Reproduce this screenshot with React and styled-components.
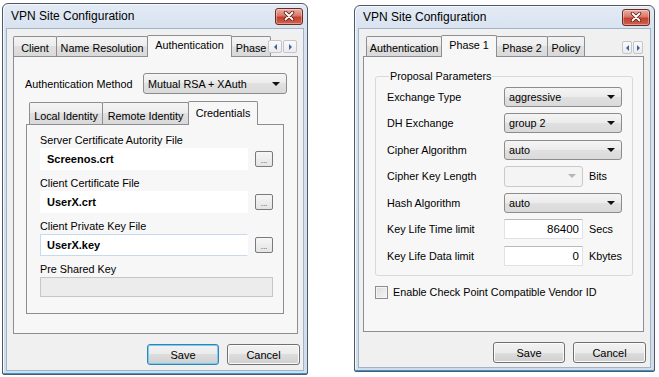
import React from "react";
import styled, { createGlobalStyle } from "styled-components";

const GlobalStyle = createGlobalStyle`
  * { box-sizing: border-box; }
  html, body { margin: 0; padding: 0; background: #ffffff; }
  body {
    font-family: "Liberation Sans", Arial, sans-serif;
    font-size: 10.8px;
    color: #000;
  }
`;

const Stage = styled.div`
  width: 659px;
  height: 377px;
  display: flex;
  align-items: flex-start;
  padding-left: 2px;
  gap: 46px;
`;

const Window = styled.div`
  width: ${({ w }) => w}px;
  height: ${({ h }) => h}px;
  margin-top: ${({ top }) => top}px;
  display: flex;
  flex-direction: column;
  border: 1px solid #4e5866;
  border-radius: 6px 6px 2px 2px;
  background: linear-gradient(#e2eaf5, #d8e3f0 24px, #d0ddec);
  padding: 0 3px 3px;
  box-shadow: inset 0 -1px 0 #3b95c9, inset 1px 1px 0 #f6f9fc;
`;

const TitleBar = styled.div`
  height: ${({ h }) => h}px;
  display: flex;
  align-items: center;
  justify-content: space-between;
  padding: 0 1px 0 5px;
`;

const Title = styled.span`
  font-size: 12px;
`;

const CloseButton = styled.div`
  width: 28px;
  height: 17px;
  border: 1px solid #6b2a24;
  border-radius: 3px;
  background: linear-gradient(#eab0a2, #d8776a 45%, #c3412f 55%, #d0604f);
  box-shadow: inset 0 0 0 1px rgba(255, 255, 255, 0.35);
  display: flex;
  align-items: center;
  justify-content: center;
`;

const Client = styled.div`
  flex: 1;
  display: flex;
  flex-direction: column;
  background: #f0f0f0;
  border: 1px solid #a2b3c7;
  padding: 7px 0 ${({ pb }) => pb}px;
`;

const TabArea = styled.div`
  flex: 1;
  display: flex;
  flex-direction: column;
  margin: ${({ m }) => m};
`;

const TabStrip = styled.div`
  position: relative;
  height: ${({ h }) => h}px;
  display: flex;
  align-items: flex-end;
  padding-left: ${({ lead }) => lead || 0}px;
`;

const Tab = styled.div`
  position: relative;
  z-index: ${({ active }) => (active ? 2 : 1)};
  width: ${({ w }) => w}px;
  height: ${({ active, h }) => (active ? h + 2 : h)}px;
  margin-bottom: ${({ active }) => (active ? -1 : 0)}px;
  margin-left: -1px;
  &:first-child {
    margin-left: 0;
  }
  border: 1px solid #8c8e94;
  border-bottom: none;
  border-radius: 2px 2px 0 0;
  background: ${({ active }) =>
    active
      ? "#f7f7f7"
      : "linear-gradient(#f4f4f4, #ececec 50%, #e0e0e0 50%, #d9d9d9)"};
  display: flex;
  justify-content: center;
  align-items: flex-start;
  padding-top: ${({ active, h }) => (active ? h - 17 : h - 15)}px;
  line-height: 13px;
  white-space: nowrap;
  overflow: hidden;
`;

const ArrowPair = styled.div`
  position: absolute;
  right: 1px;
  top: ${({ top }) => top}px;
  display: flex;
  gap: 1px;
  z-index: 3;
`;

const ArrowButton = styled.div`
  width: ${({ w }) => w}px;
  height: 13px;
  border: 1px solid #c4c6ca;
  border-radius: 2px;
  background: linear-gradient(#fafafa, #ececec);
  display: flex;
  align-items: center;
  justify-content: center;
  &::after {
    content: "";
    border-top: 3px solid transparent;
    border-bottom: 3px solid transparent;
    ${({ dir }) =>
      dir === "left"
        ? "border-right: 3px solid #3a64a8;"
        : "border-left: 3px solid #3a64a8;"}
  }
`;

const Panel = styled.div`
  flex: 1;
  display: flex;
  flex-direction: column;
  border: 1px solid #8c8e94;
  background: #f7f7f7;
  padding: ${({ p }) => p};
`;

const MethodRow = styled.div`
  display: flex;
  align-items: center;
  height: 21px;
`;

const MethodLabel = styled.span`
  width: 118px;
`;

const Combo = styled.div`
  width: ${({ w }) => w}px;
  height: ${({ h }) => h || 20}px;
  display: flex;
  align-items: center;
  padding: 0 6px 0 4px;
  border: 1px solid ${({ disabled }) => (disabled ? "#c9c9c9" : "#8b8b8b")};
  border-radius: 3px;
  background: ${({ disabled }) =>
    disabled ? "#f4f4f4" : "linear-gradient(#f5f5f5, #ebebeb 50%, #e0e0e0 50%, #dadada)"};
`;

const ComboText = styled.span`
  flex: 1;
`;

const Caret = styled.span`
  width: 0;
  height: 0;
  border-left: 4px solid transparent;
  border-right: 4px solid transparent;
  border-top: 4px solid ${({ disabled }) => (disabled ? "#b5b5b5" : "#111")};
`;

const InnerBox = styled.div`
  flex: 1;
  display: flex;
  flex-direction: column;
  margin: 8px 3px 19px 1px;
`;

const FieldList = styled.div`
  display: flex;
  flex-direction: column;
  gap: 7px;
`;

const Field = styled.div`
  display: flex;
  flex-direction: column;
  gap: 1px;
`;

const FieldLabel = styled.span`
  line-height: 13px;
`;

const FileRow = styled.div`
  display: flex;
  align-items: center;
  gap: 7px;
`;

const FileInput = styled.div`
  width: 208px;
  height: 22px;
  display: flex;
  align-items: center;
  padding-left: 6px;
  background: #ffffff;
  border: 1px solid ${({ focused }) => (focused ? "#c6daee" : "#ffffff")};
  border-right-color: #ffffff;
  font-weight: bold;
  font-size: 11px;
`;

const BrowseButton = styled.div`
  width: 18px;
  height: 16px;
  border: 1px solid #7a7a7a;
  border-radius: 2px;
  background: linear-gradient(#f6f6f6, #e4e4e4);
  display: flex;
  align-items: flex-end;
  justify-content: center;
  font-size: 8px;
  line-height: 11px;
  color: #333;
`;

const DisabledInput = styled.div`
  width: 233px;
  height: 20px;
  background: #ececec;
  border: 1px solid #c6c6c6;
`;

const Group = styled.fieldset`
  margin: 13px 0 0;
  padding: 4px 0 9px 11px;
  border: 1px solid #d3dbe0;
  border-radius: 3px;
`;

const Legend = styled.legend`
  margin-left: 2px;
  padding: 0 1px;
  line-height: 13px;
`;

const ParamGrid = styled.div`
  display: grid;
  grid-template-columns: 117px auto;
  row-gap: 6.3px;
  align-items: center;
`;

const Control = styled.div`
  display: flex;
  align-items: center;
  gap: 6px;
`;

const NumberInput = styled.div`
  width: 79px;
  height: 20px;
  display: flex;
  align-items: center;
  justify-content: flex-end;
  padding-right: 3px;
  background: #ffffff;
  border: 1px solid #dfe3e8;
  border-top-color: #b5b9c0;
  font-size: 11.5px;
`;

const CheckRow = styled.div`
  display: flex;
  align-items: center;
  gap: 5px;
  margin-top: 10px;
`;

const CheckBox = styled.div`
  width: 13px;
  height: 13px;
  border: 1px solid #8f8f8f;
  background: linear-gradient(135deg, #dcdcdc, #f6f6f6);
  box-shadow: inset 0 0 0 1px #f4f4f4;
`;

const ButtonRow = styled.div`
  display: flex;
  justify-content: flex-end;
  gap: 8px;
  margin-top: 10px;
  padding-right: ${({ pr }) => pr}px;
`;

const Button = styled.div`
  width: ${({ w }) => w}px;
  height: 21px;
  display: flex;
  align-items: center;
  justify-content: center;
  border: 1px solid ${({ primary }) => (primary ? "#3c7fb1" : "#707070")};
  border-radius: 3px;
  background: linear-gradient(#f2f2f2, #ebebeb 50%, #dddddd 50%, #cfcfcf);
  box-shadow: inset 0 0 0 1px ${({ primary }) => (primary ? "#6ed0f4" : "#fbfbfb")};
  font-size: 11px;
`;

const CloseIcon = () => (
  <svg width="12" height="10" viewBox="0 0 12 10">
    <path d="M2.5 1.5 L9.5 8.5 M9.5 1.5 L2.5 8.5" stroke="#5a1a14" strokeWidth="3.4" strokeLinecap="round" />
    <path d="M2.5 1.5 L9.5 8.5 M9.5 1.5 L2.5 8.5" stroke="#ffffff" strokeWidth="1.8" strokeLinecap="round" />
  </svg>
);

const WindowFrame = ({ w, h, top, tb, children }) => (
  <Window w={w} h={h} top={top}>
    <TitleBar h={tb}>
      <Title>VPN Site Configuration</Title>
      <CloseButton>
        <CloseIcon />
      </CloseButton>
    </TitleBar>
    {children}
  </Window>
);

const Arrows = ({ top, w }) => (
  <ArrowPair top={top}>
    <ArrowButton w={w} dir="left" />
    <ArrowButton w={w} dir="right" />
  </ArrowPair>
);

const files = [
  { label: "Server Certificate Autority File", value: "Screenos.crt" },
  { label: "Client Certificate File", value: "UserX.crt" },
  { label: "Client Private Key File", value: "UserX.key", focused: true },
];

const params = [
  { label: "Exchange Type", combo: "aggressive" },
  { label: "DH Exchange", combo: "group 2" },
  { label: "Cipher Algorithm", combo: "auto" },
  { label: "Cipher Key Length", combo: "", disabled: true, unit: "Bits" },
  { label: "Hash Algorithm", combo: "auto" },
  { label: "Key Life Time limit", value: "86400", unit: "Secs" },
  { label: "Key Life Data limit", value: "0", unit: "Kbytes" },
];

const AuthenticationWindow = () => (
  <WindowFrame w={306} h={372} top={3} tb={24}>
    <Client pb={5}>
      <TabArea m="0 5px 0 6px">
        <TabStrip h={20}>
          <Tab h={20} w={44}>Client</Tab>
          <Tab h={20} w={92}>Name Resolution</Tab>
          <Tab h={20} w={85} active>Authentication</Tab>
          <Tab h={20} w={40}>Phase</Tab>
          <Arrows top={4} w={14} />
        </TabStrip>
        <Panel p="16px 10px 0 11px">
          <MethodRow>
            <MethodLabel>Authentication Method</MethodLabel>
            <Combo w={144} h={21}>
              <ComboText>Mutual RSA + XAuth</ComboText>
              <Caret />
            </Combo>
          </MethodRow>
          <InnerBox>
            <TabStrip h={22} lead={3}>
              <Tab h={22} w={74}>Local Identity</Tab>
              <Tab h={22} w={87}>Remote Identity</Tab>
              <Tab h={22} w={70} active>Credentials</Tab>
            </TabStrip>
            <Panel p="9px 0 0 13px">
              <FieldList>
                {files.map((file) => (
                  <Field key={file.label}>
                    <FieldLabel>{file.label}</FieldLabel>
                    <FileRow>
                      <FileInput focused={file.focused}>{file.value}</FileInput>
                      <BrowseButton>...</BrowseButton>
                    </FileRow>
                  </Field>
                ))}
                <Field>
                  <FieldLabel>Pre Shared Key</FieldLabel>
                  <DisabledInput />
                </Field>
              </FieldList>
            </Panel>
          </InnerBox>
        </Panel>
      </TabArea>
      <ButtonRow pr={3}>
        <Button w={72} primary>Save</Button>
        <Button w={73}>Cancel</Button>
      </ButtonRow>
    </Client>
  </WindowFrame>
);

const PhaseWindow = () => (
  <WindowFrame w={301} h={367} top={5} tb={22}>
    <Client pb={4}>
      <TabArea m="0 6px 0 4px">
        <TabStrip h={20} lead={3}>
          <Tab h={20} w={76}>Authentication</Tab>
          <Tab h={20} w={56} active>Phase 1</Tab>
          <Tab h={20} w={52}>Phase 2</Tab>
          <Tab h={20} w={38}>Policy</Tab>
          <Arrows top={5} w={10} />
        </TabStrip>
        <Panel p="0 10px 0 11px">
          <Group>
            <Legend>Proposal Parameters</Legend>
            <ParamGrid>
              {params.map((row) => (
                <React.Fragment key={row.label}>
                  <span>{row.label}</span>
                  <Control>
                    {row.value !== undefined ? (
                      <NumberInput>{row.value}</NumberInput>
                    ) : (
                      <Combo w={row.disabled ? 79 : 118} h={row.disabled ? 21 : 20} disabled={row.disabled}>
                        <ComboText>{row.combo}</ComboText>
                        <Caret disabled={row.disabled} />
                      </Combo>
                    )}
                    {row.unit && <span>{row.unit}</span>}
                  </Control>
                </React.Fragment>
              ))}
            </ParamGrid>
          </Group>
          <CheckRow>
            <CheckBox />
            <span>Enable Check Point Compatible Vendor ID</span>
          </CheckRow>
        </Panel>
      </TabArea>
      <ButtonRow pr={4}>
        <Button w={72}>Save</Button>
        <Button w={73}>Cancel</Button>
      </ButtonRow>
    </Client>
  </WindowFrame>
);

const App = () => (
  <>
    <GlobalStyle />
    <Stage>
      <AuthenticationWindow />
      <PhaseWindow />
    </Stage>
  </>
);

export default App;
